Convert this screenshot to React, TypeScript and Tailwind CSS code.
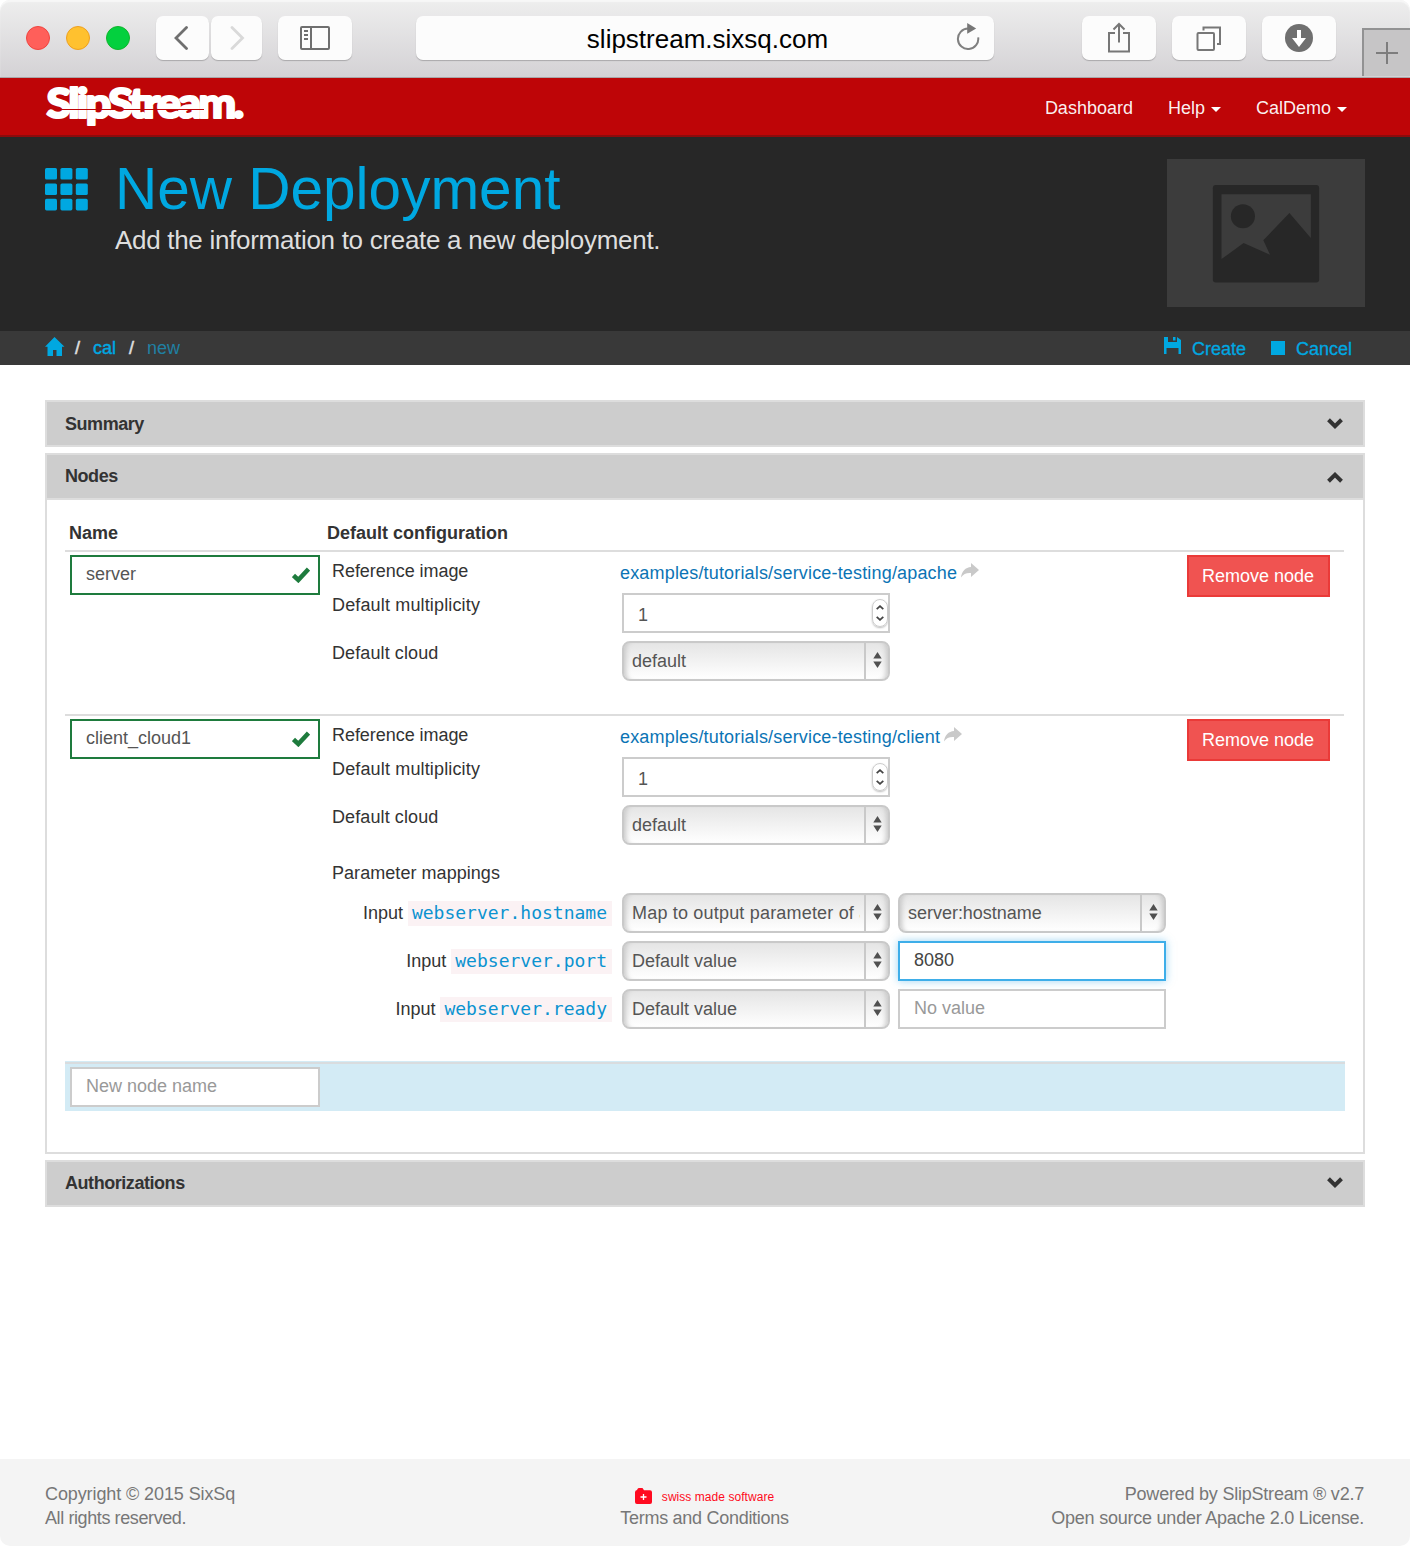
import React from "react";

type Kids = { children?: React.ReactNode };

function ToolbarButton({ className, children }: Kids & { className: string }) {
  return (
    <div
      className={`flex h-[44px] shrink-0 items-center justify-center rounded-[7px] bg-[#fcfcfc] shadow-[0_1px_1px_rgba(0,0,0,0.22)] ${className}`}
    >
      {children}
    </div>
  );
}

function BrowserBar() {
  return (
    <div className="flex h-[78px] items-start rounded-t-[10px] border-b border-[#a9a7a9] bg-gradient-to-b from-[#eeeeee] to-[#d4d2d5] pt-4 shadow-[inset_0_2px_1px_#f7f7f7]">
      <div className="ml-[26px] flex h-[44px] items-center gap-4">
        <span className="size-6 rounded-full border border-[#f0443f] bg-[#ff5f5a]" />
        <span className="size-6 rounded-full border border-[#eea020] bg-[#ffc12f]" />
        <span className="size-6 rounded-full border border-[#10b52c] bg-[#03d03e]" />
      </div>
      <ToolbarButton className="ml-[26px] w-[53px]">
        <svg className="-ml-[4px] h-6 w-4" viewBox="0 0 16 24" fill="none" stroke="#6f6f6f" strokeWidth="2.8" strokeLinecap="round" strokeLinejoin="miter">
          <path d="M13.5 1.5 3 12l10.5 10.5" />
        </svg>
      </ToolbarButton>
      <ToolbarButton className="ml-[2px] w-[51px]">
        <svg className="h-6 w-4" viewBox="0 0 16 24" fill="none" stroke="#d9d9d9" strokeWidth="2.8" strokeLinecap="round">
          <path d="M3 1.5 13.5 12 3 22.5" />
        </svg>
      </ToolbarButton>
      <ToolbarButton className="ml-4 w-[74px]">
        <svg className="h-6 w-[30px]" viewBox="0 0 30 24" fill="none" stroke="#6f6f6f" strokeWidth="2">
          <rect x="1" y="1" width="28" height="22" rx="1" />
          <path d="M11 1v22M4 5h4M4 9h4M4 13h4" />
        </svg>
      </ToolbarButton>
      <ToolbarButton className="relative ml-16 w-[578px]">
        <span className="mt-[2px] ml-[5px] text-[26px] leading-[30px] text-black">slipstream.sixsq.com</span>
        <svg className="absolute top-[6px] right-[14px] h-7 w-6" viewBox="0 0 24 28" fill="none">
          <path d="M12 6.600A10.200 10.200 0 1 0 22.200 15.400" stroke="#808080" strokeWidth="2" />
          <path d="M11.200 1v10.800l9-5.400z" fill="#777" />
        </svg>
      </ToolbarButton>
      <ToolbarButton className="ml-[88px] w-[74px]">
        <svg className="-mt-[1px] h-[31px] w-6" viewBox="0 0 24 31" fill="none" stroke="#777" strokeWidth="2">
          <path d="M8 11H2v18.600h20V11h-6M12 20.500V2M6.500 7.500 12 2l5.500 5.500" />
        </svg>
      </ToolbarButton>
      <ToolbarButton className="ml-4 w-[74px]">
        <svg className="mr-[2px] h-[25px] w-[25px]" viewBox="0 0 25 25" fill="none" stroke="#777" strokeWidth="2">
          <rect x="1.500" y="7" width="16.500" height="17" rx="1" />
          <path d="M7.500 4.500V1.500H24v16.500h-3" />
        </svg>
      </ToolbarButton>
      <ToolbarButton className="ml-4 w-[74px]">
        <svg className="size-7" viewBox="0 0 28 28">
          <circle cx="14" cy="14" r="14" fill="#6f6f6f" />
          <path d="M12 6h4v8h5l-7 9-7-9h5z" fill="#fff" />
        </svg>
      </ToolbarButton>
      <div className="mt-3 ml-[26px] flex h-[48px] w-12 items-center justify-center border-t-2 border-l-2 border-[#929293] bg-[#c6c5c6]">
        <svg className="mr-[1px] size-[22px]" viewBox="0 0 22 22" stroke="#7d7d7d" strokeWidth="2">
          <path d="M11 0v22M0 11h22" />
        </svg>
      </div>
    </div>
  );
}

function Caret() {
  return <span className="mt-[3px] ml-[6px] border-x-[5px] border-t-[5px] border-x-transparent border-t-white" />;
}

function NavBar() {
  return (
    <div className="flex h-[59px] justify-between border-b-2 border-[#8c0b0d] bg-[#be0507] text-[18px] text-white/95">
      <svg className="ml-[44px] h-[57px] w-[204px]" viewBox="0 0 204 57">
        <text
          x="2.500"
          y="40"
          textLength="195"
          lengthAdjust="spacingAndGlyphs"
          fill="#fff"
          stroke="#fff"
          strokeWidth="2.200"
          strokeLinejoin="round"
          className="font-['Lato'] text-[42.500px] font-black tracking-[-2.500px]"
        >
          SlipStream.
        </text>
        <path d="M16 31.500h144" stroke="#be0507" strokeWidth="1" />
      </svg>
      <div className="mr-[63px] flex h-[60px] items-center">
        <span>Dashboard</span>
        <span className="ml-[35px] flex items-center">Help<Caret /></span>
        <span className="ml-[35px] flex items-center">CalDemo<Caret /></span>
      </div>
    </div>
  );
}

function PageHeader() {
  return (
    <div className="flex h-[194px] bg-[#272727]">
      <svg className="mt-[31px] ml-[45px] size-[43px]" viewBox="0 0 43 43" fill="#00a8e1">
        {[0, 15.4, 30.8].map((y) =>
          [0, 15.4, 30.8].map((x) => <rect key={`${x}-${y}`} x={x} y={y} width="12" height="11.600" rx="1.600" />),
        )}
      </svg>
      <div className="ml-[27px]">
        <h1 className="mt-[20px] text-[58.500px] leading-[64px] whitespace-nowrap text-[#00a8e1]">New Deployment</h1>
        <p className="mt-[3px] text-[26px] leading-8 tracking-[-0.300px] whitespace-nowrap text-[#dedede]">
          Add the information to create a new deployment.
        </p>
      </div>
      <svg className="mt-[22px] mr-[45px] ml-auto h-[148px] w-[198px]" viewBox="202 57 592 442" preserveAspectRatio="none">
        <rect x="202" y="57" width="592" height="442" fill="#3c3c3c" />
        <rect x="339" y="135" width="318" height="291" rx="9" fill="#272727" />
        <path d="M365 162H632V293L568 218 490 300 510 343 431 308 365 356z" fill="#3c3c3c" />
        <circle cx="429" cy="228" r="36" fill="#272727" />
      </svg>
    </div>
  );
}

function ActionBar() {
  return (
    <div className="flex h-[34px] items-center justify-between bg-[#393939] pr-[58px] pl-[45px] text-[18px] text-[#00a8e1]">
      <div className="flex h-[34px] items-center">
        <svg className="mb-1 h-[19px] w-5" viewBox="0 0 20 19" fill="#00a8e1">
          <path d="M9.500 0 0 9.800h2.500V19H8v-6h3.500v6H17V9.800h2.500z" />
        </svg>
        <span className="ml-[10px] text-[#e0e0e0] [-webkit-text-stroke:0.500px]">/</span>
        <span className="ml-[13px] [-webkit-text-stroke:0.400px]">cal</span>
        <span className="ml-[13px] text-[#e0e0e0] [-webkit-text-stroke:0.500px]">/</span>
        <span className="ml-[13px] text-[#2080a2]">new</span>
      </div>
      <div className="flex h-[34px] items-center [-webkit-text-stroke:0.300px]">
        <svg className="mb-[5px] h-[17px] w-[17px]" viewBox="0 0 17 17" fill="#00a8e1">
          <path d="M0 0h4v5h9V0l4 3v14h-2.500v-6h-12v6H0zM9 0h2.500v3.500H9z" />
        </svg>
        <span className="mt-[2px] ml-[11px]">Create</span>
        <span className="mb-[1px] ml-[25px] size-[14px] bg-[#00a8e1]" />
        <span className="mt-[2px] ml-[11px]">Cancel</span>
      </div>
    </div>
  );
}

function PanelTitle({ title, open, raised }: { title: string; open?: boolean; raised?: boolean }) {
  return (
    <div className={`flex h-[43px] items-center justify-between bg-[#cdcdcd] pr-5 pl-[18px] ${raised ? "pb-[2px]" : ""}`}>
      <span className="text-[18px] leading-6 font-bold tracking-[-0.450px] text-[#333]">{title}</span>
      <svg className={open ? "mt-[4px] h-[11px] w-4 rotate-180" : "h-[11px] w-4"} viewBox="0 0 16 11" fill="none" stroke="#333" strokeWidth="4">
        <path d="M1.500 1.800 8 8.200l6.500-6.400" />
      </svg>
    </div>
  );
}

function Select({ value, className = "" }: { value: string; className?: string }) {
  return (
    <div
      className={`flex h-10 w-[268px] shrink-0 items-stretch rounded-[8px] border-2 border-[#c9c9c9] bg-gradient-to-b from-[#e5e5e5] to-[#ffffff] shadow-[inset_6px_0_5px_-4px_#c8c8c8,inset_-6px_0_5px_-4px_#c8c8c8] ${className}`}
    >
      <span className="ml-2 w-[228px] shrink-0 overflow-hidden leading-[36px] whitespace-nowrap text-[#555]">{value}</span>
      <span className="ml-[4px] w-[2px] bg-[#c9c9c9]" />
      <svg className="mt-[9px] ml-[6.500px] h-4 w-[9px]" viewBox="0 0 9 16" fill="#505050">
        <path d="M4.500 0 8.700 6.500H.3zM4.500 16 8.700 9.500H.3z" />
      </svg>
    </div>
  );
}

function NumberField({ value }: { value: string }) {
  return (
    <div className="flex h-10 w-[268px] items-center justify-between border-2 border-[#ccc] bg-white">
      <span className="mt-[4px] ml-[14px] text-[#555]">{value}</span>
      <span className="flex h-7 w-4 flex-col items-center justify-center rounded-full border border-[#ccc] shadow-[0_1px_2px_#bbb]">
        <svg className="h-4 w-2" viewBox="0 0 8 16" fill="none" stroke="#444" strokeWidth="1.800">
          <path d="M.7 4.200 4 1.200l3.300 3M.7 11.800 4 14.800l3.300-3" />
        </svg>
      </span>
    </div>
  );
}

function TextField({ value, className }: { value: string; className: string }) {
  return <div className={`flex h-10 shrink-0 items-center border-2 bg-white pb-[2px] pl-[14px] ${className}`}>{value}</div>;
}

function NameField({ value }: { value: string }) {
  return (
    <div className="relative ml-[5px] h-10 w-[250px] shrink-0">
      <TextField value={value} className="w-[250px] border-[#1e7b3d] text-[#555]" />
      <svg className="absolute top-[12px] right-[10px] h-[16px] w-[18px]" viewBox="0 0 18 16" fill="none" stroke="#1e7b3d" strokeWidth="4.500">
        <path d="M1.500 8.500 6.300 13 16.500 2" />
      </svg>
    </div>
  );
}

function ParamRow({ name, mode, modeClass, children }: Kids & { name: string; mode: string; modeClass?: string }) {
  return (
    <div className="flex h-10 items-center">
      <div className="flex w-[280px] items-center justify-end">
        <span>Input</span>
        <code className="ml-[5px] h-[25px] bg-[#fbf2f4] pr-[5px] pl-1 font-['DejaVu_Sans_Mono',monospace] text-[18px] leading-[24px] text-[#0b93d0]">
          {name}
        </code>
      </div>
      <Select value={mode} className={`ml-[10px] ${modeClass ?? ""}`} />
      <div className="ml-2">{children}</div>
    </div>
  );
}

function NodeRow({ name, image, className, children }: Kids & { name: string; image: string; className: string }) {
  return (
    <div className={`flex items-start border-t-2 border-[#ddd] pt-[3px] ${className}`}>
      <NameField value={name} />
      <div className="ml-3 w-[855px] shrink-0 text-[#333]">
        <div className="flex">
          <div className="w-[288px] shrink-0">
            <div className="mt-[4px] leading-6 tracking-[-0.050px]">Reference image</div>
            <div className="mt-[10px] leading-6 tracking-[0.150px]">Default multiplicity</div>
            <div className="mt-6 leading-6 tracking-[0.100px]">Default cloud</div>
          </div>
          <div>
            <div className="mt-[6px] flex h-6 items-center tracking-[0.170px] text-[#0b74b5]">
              {image}
              <svg className="mb-[5px] ml-[4px] h-[15px] w-[18px]" viewBox="0 0 18 15" fill="#c9c9c9">
                <path d="M10 0 18 7l-8 7v-4C5.500 9.600 2.500 11 0 14.500 .8 8.500 4.500 4.300 10 4z" />
              </svg>
            </div>
            <div className="mt-2 ml-[2px]">
              <NumberField value="1" />
              <Select value="default" className="mt-2" />
            </div>
          </div>
        </div>
        {children}
      </div>
      <button className="h-[42px] w-[143px] shrink-0 border-2 border-[#ea3a38] bg-[#f05351] pr-[1px] text-white">Remove node</button>
    </div>
  );
}

function NodesPanel() {
  return (
    <section className="mt-[6px] h-[701px] border-2 border-[#ddd]">
      <PanelTitle title="Nodes" open raised />
      <div className="h-[2px] bg-[#ddd]" />
      <div className="ml-[18px] w-[1280px]">
        <div className="flex h-[50px] pt-[21px] pl-1 leading-6 font-bold text-[#333]">
          <span className="w-[258px]">Name</span>
          <span>Default configuration</span>
        </div>
        <NodeRow name="server" image="examples/tutorials/service-testing/apache" className="mr-[1px] h-[164px]" />
        <NodeRow name="client_cloud1" image="examples/tutorials/service-testing/client" className="mr-[1px] h-[347px]">
          <div className="mt-4 leading-6 tracking-[0.050px]">Parameter mappings</div>
          <div className="mt-2 flex flex-col gap-2">
            <ParamRow name="webserver.hostname" mode="Map to output parameter of a" modeClass="tracking-[0.190px]">
              <Select value="server:hostname" className="tracking-[-0.020px]" />
            </ParamRow>
            <ParamRow name="webserver.port" mode="Default value">
              <TextField value="8080" className="w-[268px] border-[#3eaee9] text-[#444] shadow-[0_0_8px_rgba(62,174,233,0.500)]" />
            </ParamRow>
            <ParamRow name="webserver.ready" mode="Default value">
              <TextField value="No value" className="w-[268px] border-[#ccc] text-[#999]" />
            </ParamRow>
          </div>
        </NodeRow>
        <div className="h-[50px] border-t border-[#d3ebf5] bg-[#d3ebf5]">
          <div className="h-[2px] bg-[#d9dcde]" />
          <TextField value="New node name" className="mt-[3px] ml-[5px] w-[250px] border-[#ccc] text-[#999]" />
        </div>
      </div>
    </section>
  );
}

function Footer() {
  return (
    <footer className="mt-auto flex h-[87px] justify-between rounded-b-[10px] bg-[#f4f4f4] pr-[46px] pl-[45px] pt-[23px] text-[18px] leading-6 text-[#777]">
      <div className="w-[314px]">
        <div className="tracking-[-0.100px]">Copyright © 2015 SixSq</div>
        <div className="tracking-[-0.400px]">All rights reserved.</div>
      </div>
      <div className="flex flex-col items-center">
        <div className="flex h-6 items-center text-[12px] text-[#ff0a20]">
          <svg className="mt-[4px] mr-[10px] h-4 w-[17px]" viewBox="0 0 17 16">
            <path d="M2.500 1Q3 0 4 0h3.500l1.500 2.300H15q2 0 2 2V14q0 2-2 2H2q-2 0-2-2V4.300Q0 2.300 2 2z" fill="#ff0a20" />
            <path d="M8.500 6v6M5.500 9h6" stroke="#fff" strokeWidth="1.300" />
          </svg>
          <span className="mt-[6px] tracking-[0.050px]">swiss made software</span>
        </div>
        <div className="tracking-[-0.280px]">Terms and Conditions</div>
      </div>
      <div className="w-[314px] text-right whitespace-nowrap">
        <div className="tracking-[-0.220px]">Powered by SlipStream ® v2.7</div>
        <div className="tracking-[-0.230px]">Open source under Apache 2.0 License.</div>
      </div>
    </footer>
  );
}

export default function App() {
  return (
    <div className="flex h-[1546px] w-[1410px] flex-col overflow-hidden bg-white font-['Liberation_Sans',Arial,sans-serif] text-[18px]">
      <BrowserBar />
      <NavBar />
      <PageHeader />
      <ActionBar />
      <main className="px-[45px] pt-[35px]">
        <section className="border-2 border-[#ddd]">
          <PanelTitle title="Summary" />
        </section>
        <NodesPanel />
        <section className="mt-[6px] border-2 border-[#ddd]">
          <PanelTitle title="Authorizations" raised />
        </section>
      </main>
      <Footer />
    </div>
  );
}
